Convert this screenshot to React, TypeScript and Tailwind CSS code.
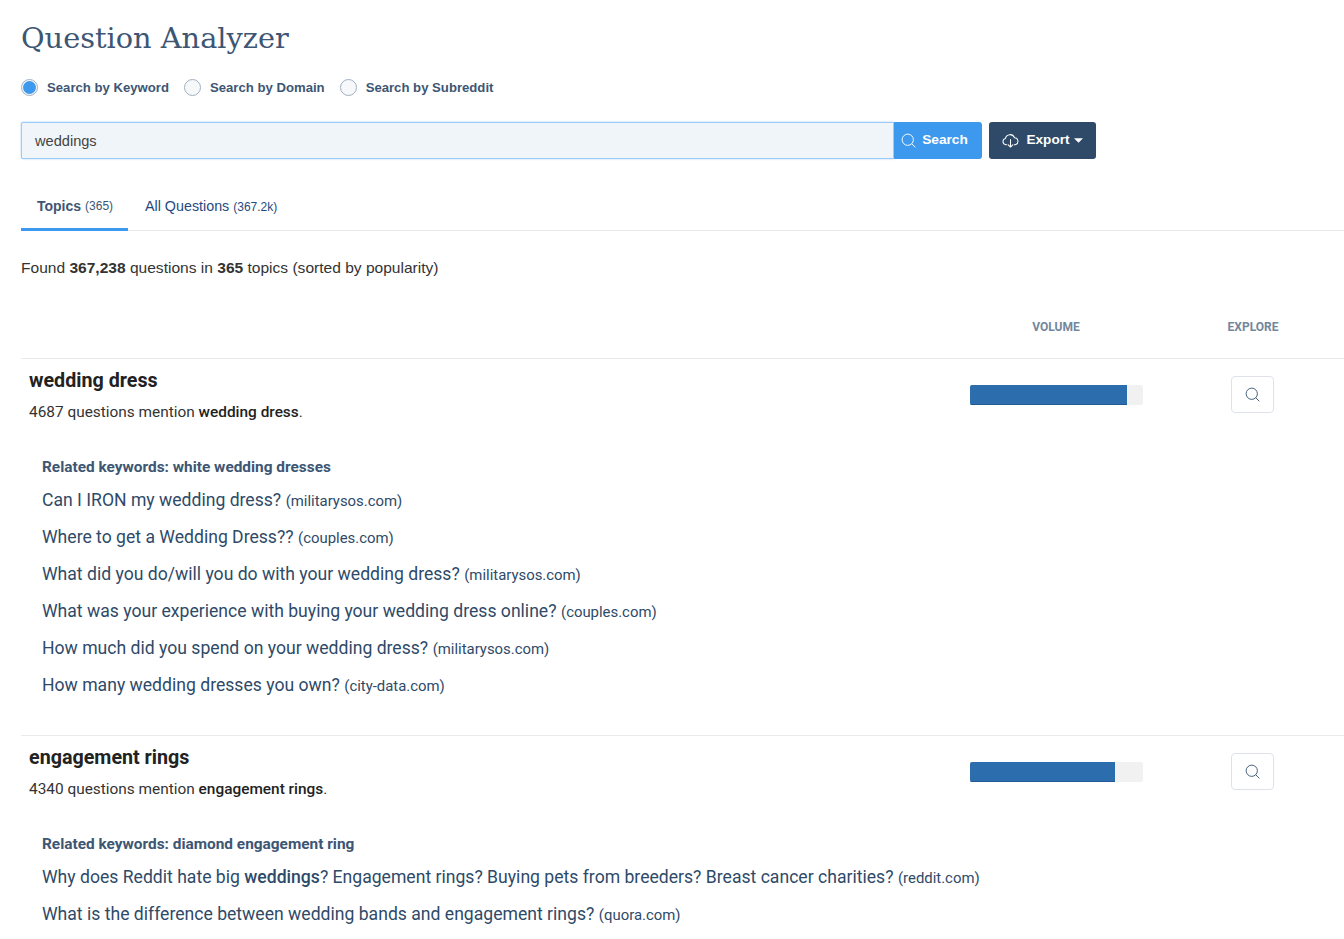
const topics = [
  {
    name: 'wedding dress',
    count: 4687,
    percent: 91,
    keywords: 'white wedding dresses',
    questions: [
      { text: 'Can I IRON my wedding dress?', source: 'militarysos.com' },
      { text: 'Where to get a Wedding Dress??', source: 'couples.com' },
      { text: 'What did you do/will you do with your wedding dress?', source: 'militarysos.com' },
      { text: 'What was your experience with buying your wedding dress online?', source: 'couples.com' },
      { text: 'How much did you spend on your wedding dress?', source: 'militarysos.com' },
      { text: 'How many wedding dresses you own?', source: 'city-data.com' },
    ],
  },
  {
    name: 'engagement rings',
    count: 4340,
    percent: 84,
    keywords: 'diamond engagement ring',
    questions: [
      {
        text: 'Why does Reddit hate big ',
        bold: 'weddings',
        rest: '? Engagement rings? Buying pets from breeders? Breast cancer charities?',
        source: 'reddit.com',
      },
      { text: 'What is the difference between wedding bands and engagement rings?', source: 'quora.com' },
    ],
  },
];

function SearchIcon({ className }: { className: string }) {
  return (
    <svg viewBox="0 0 16 16" fill="none" stroke="currentColor" strokeWidth="1" className={className}>
      <circle cx="7.2" cy="7.2" r="6" />
      <path d="M11.6 11.6 15 15" strokeLinecap="round" />
    </svg>
  );
}

function CloudIcon() {
  return (
    <svg viewBox="0 0 18 16" fill="none" stroke="currentColor" strokeWidth="1.1" className="w-[17px] h-[15px]">
      <path d="M5 12.5H4.2A3.4 3.4 0 0 1 3.6 5.8 5 5 0 0 1 13.2 5a3.8 3.8 0 0 1 .8 7.5h-1" strokeLinecap="round" strokeLinejoin="round" />
      <path d="M9 7v8M6.6 12.7 9 15l2.4-2.3" strokeLinecap="round" strokeLinejoin="round" />
    </svg>
  );
}

function Radio({ label, checked }: { label: string; checked?: boolean }) {
  return (
    <label className="flex items-center mr-[15px]">
      <span className="w-[17px] h-[17px] rounded-full border border-[#9fb0c3] bg-[#f7f8f9] flex items-center justify-center">
        {checked && <span className="w-[13px] h-[13px] rounded-full bg-[#3d99ed]" />}
      </span>
      <span className="ml-[9px] text-[13.15px] font-bold text-[#3d5674]">{label}</span>
    </label>
  );
}

export default function App() {
  return (
    <div className="h-[939px] overflow-hidden bg-white pl-[21px] font-['Liberation_Sans',Arial,sans-serif]">
      <h1 className="pt-[17px] h-[60px] text-[28.8px] leading-[42px] font-normal text-[#3d5674] font-['DejaVu_Serif',serif]">
        Question Analyzer
      </h1>

      <div className="flex items-center h-[20px] mt-[18px]">
        <Radio label="Search by Keyword" checked />
        <Radio label="Search by Domain" />
        <Radio label="Search by Subreddit" />
      </div>

      <div className="flex mt-[24px]">
        <div className="w-[873px] h-[37px] bg-[#f0f5f9] border border-[#9ccbf5] rounded-l-[2px] shadow-[0_0_2px_#9ccbf5] pl-[13px] pt-[2px] flex items-center text-[14.6px] text-[#444]">
          weddings
        </div>
        <button className="w-[88px] h-[37px] bg-[#3d99ed] rounded-r-[3px] text-white text-[13.7px] font-bold flex items-center justify-center gap-[6px] pr-[7px]">
          <SearchIcon className="w-[15px] h-[15px]" />
          Search
        </button>
        <button className="ml-[7px] w-[107px] h-[37px] bg-[#2e4a68] rounded-[3px] text-white text-[13.6px] font-bold flex items-center justify-center">
          <CloudIcon />
          <span className="ml-[7px]">Export</span>
          <svg viewBox="0 0 8 4" className="w-[9px] h-[5px] ml-[4px] fill-white"><path d="M0 0h8L4 4z" /></svg>
        </button>
      </div>

      <div className="flex mt-[26px] border-b border-[#e8eaed] h-[46px]">
        <div className="w-[107px] h-[46px] border-b-[3px] border-[#3d99ed] flex justify-center pt-[11px] pl-[1px] text-[14px] text-[#3d5674]">
          <span className="font-bold">Topics</span>
          <span className="text-[12px] ml-[4px] leading-[21px]">(365)</span>
        </div>
        <div className="ml-[17px] pt-[11px] text-[14.3px] text-[#1f4a80]">
          All Questions<span className="text-[12px] ml-[4px]">(367.2k)</span>
        </div>
      </div>

      <p className="mt-[28px] text-[15.55px] leading-[18px] text-[#333]">
        Found <b>367,238</b> questions in <b>365</b> topics (sorted by popularity)
      </p>

      <div className="flex h-[81px] pt-[41px] text-[12px] font-bold text-[#73879c] font-['Roboto',sans-serif]">
        <span className="ml-[1011px] w-[48px] text-center">VOLUME</span>
        <span className="ml-[147px] w-[52px] text-center">EXPLORE</span>
      </div>

      {topics.map((topic) => (
        <div key={topic.name} className="border-t border-[#e8eaed] h-[377px] flex font-['Roboto',sans-serif]">
          <div className="w-[949px] pl-[8px] pt-[9px]">
            <h2 className="text-[19.7px] leading-[26px] font-bold text-[#222]">{topic.name}</h2>
            <p className="mt-[8px] text-[15.4px] leading-[20px] text-[#333]">
              {topic.count} questions mention <b className="font-medium text-[#222]">{topic.name}</b>.
            </p>
            <div className="pl-[13px] mt-[35px]">
              <p className="text-[15.4px] leading-[20px] font-bold text-[#3d5674] mb-[7px]">
                Related keywords: {topic.keywords}
              </p>
              {topic.questions.map((q) => (
                <p key={q.text} className="h-[37px] text-[17.6px] leading-[33px] text-[#2e4a68] whitespace-nowrap">
                  {q.text}
                  {q.bold && <b className="font-medium">{q.bold}</b>}
                  {q.rest}
                  <span className="text-[14.9px] ml-[4.5px]">({q.source})</span>
                </p>
              ))}
            </div>
          </div>
          <div className="w-[173px] h-[20px] mt-[26px] bg-[#f1f1f1] rounded-[2px] overflow-hidden">
            <div className="h-full bg-[#2b6dad] border-b border-[#215a94]" style={{ width: `${topic.percent}%` }} />
          </div>
          <div className="ml-[88px] mt-[17px] w-[43px] h-[37px] border border-[#dfe3e9] rounded-[4px] flex items-center justify-center text-[#3d5674]">
            <SearchIcon className="w-[15px] h-[15px]" />
          </div>
        </div>
      ))}
    </div>
  );
}
